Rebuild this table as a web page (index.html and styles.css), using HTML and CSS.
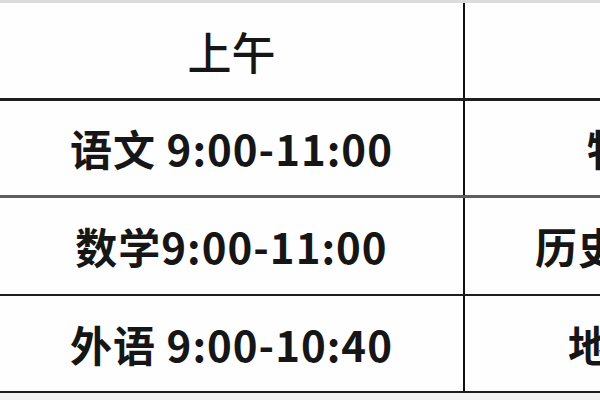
FILE: index.html
```html
<!DOCTYPE html>
<html lang="zh">
<head>
<meta charset="utf-8">
<link rel="stylesheet" href="styles.css">
</head>
<body>
<div class="top"></div>
<div class="table">
  <div class="row head">
    <div class="cell left"><span class="htext">上午</span></div>
    <div class="cell right"></div>
  </div>
  <div class="row r1">
    <div class="cell left">语文 9:00-11:00</div>
    <div class="cell right p1">物理 15:00-16:15</div>
  </div>
  <div class="row r2">
    <div class="cell left">数学9:00-11:00</div>
    <div class="cell right p2">历史15:00-16:15</div>
  </div>
  <div class="row r3">
    <div class="cell left">外语 9:00-10:40</div>
    <div class="cell right p3">地理 15:00-16:15</div>
  </div>
</div>
</body>
</html>
```
FILE: styles.css
```css
html, body {
  margin: 0;
  padding: 0;
  width: 600px;
  height: 400px;
  overflow: hidden;
  background: #f4f4f4;
}
.top {
  height: 3px;
  background: #dcdcdc;
}
.table {
  width: 1000px;
  font-family: "Noto Sans CJK SC", "Noto Sans", sans-serif;
  color: #161616;
}
.row {
  display: flex;
  background: #fefefe;
  border-bottom: 3px solid #1e1e1e;
}
.head { height: 95px; }
.r1 { height: 94px; border-bottom: 3px solid #5e5e5e; }
.r2 { height: 96px; border-bottom-width: 2px; }
.r3 { height: 95px; border-bottom-width: 2px; }
.cell {
  display: flex;
  align-items: center;
  font-size: 42px;
  font-weight: 700;
  letter-spacing: 1px;
  line-height: 1;
  white-space: nowrap;
}
.left {
  flex: none;
  width: 463px;
  justify-content: center;
  border-right: 2px solid #111;
}
.right {
  flex: 1;
  overflow: hidden;
}
.htext {
  font-size: 44px;
  font-weight: 500;
  letter-spacing: 0;
}
.p1 { padding-left: 122px; }
.p2 { padding-left: 70px; }
.p3 { padding-left: 103px; }
```
